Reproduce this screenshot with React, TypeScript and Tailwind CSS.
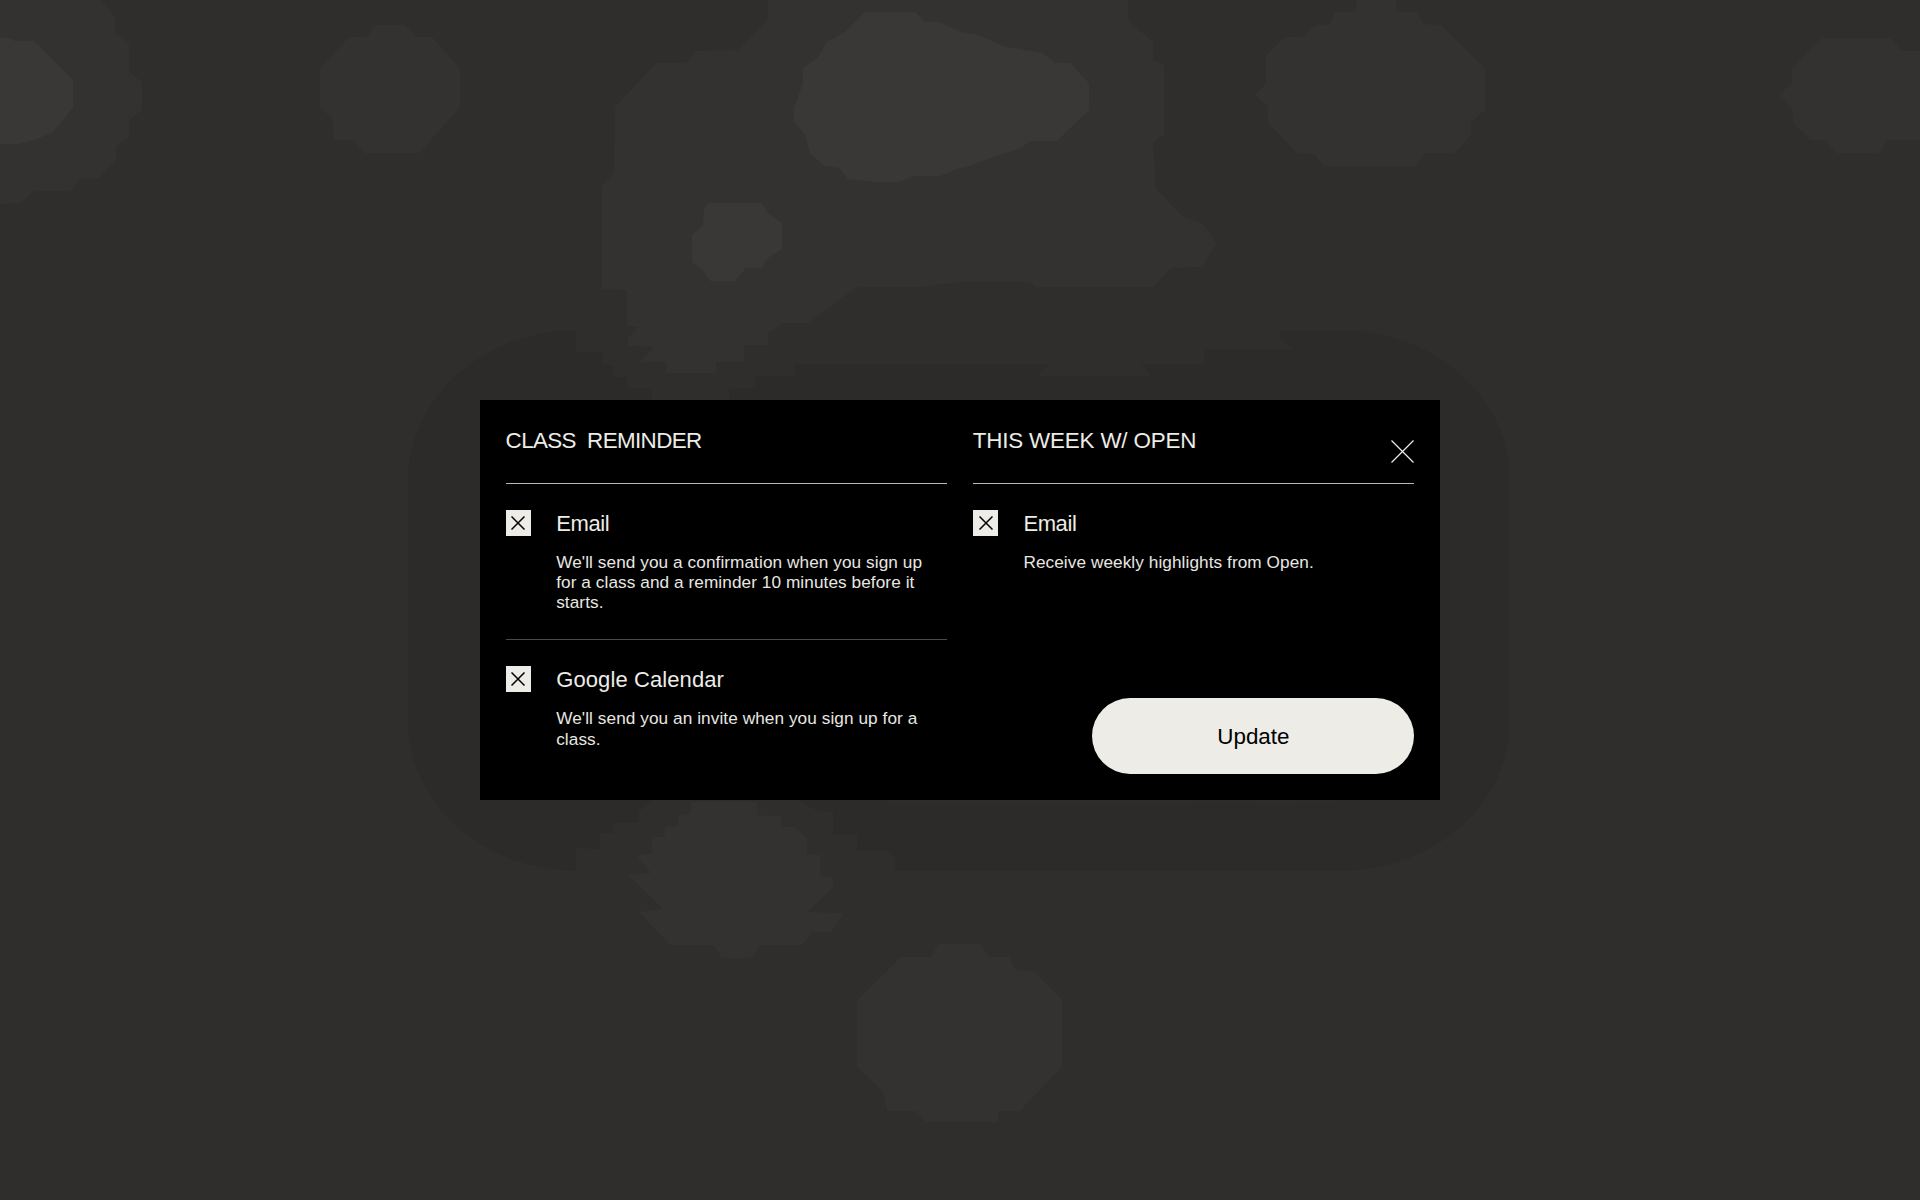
const haloCut =
  "576,300 576,352 602,352 602,365 614,366 614,377 627,377 627,388 652,389 652,400 729,400 729,389 755,388 755,376 794,376 794,364 1049,364 1037,376 1151,376 1141,364 1204,364 1204,349 1292,349 1280,337 1280,300";
const haloCutBottom =
  "652,800 639,811 639,823 614,823 614,833 600,833 600,849 576,848 576,880 895,880 895,858 887,851 857,850 857,835 833,834 833,812 820,812 798,800";

const midShapes = [
  // center mass behind the modal top
  "768,0 768,20 738,50 695,51 686,63 656,63 615,107 614,173 602,185 602,289 627,290 627,326 638,327 628,338 628,346 652,347 652,350 640,362 666,362 666,373 716,373 716,362 744,362 744,345 768,345 768,333 784,323 808,323 857,287 922,287 960,282 1030,282 1036,287 1153,287 1171,268 1202,267 1217,243 1202,223 1183,217 1156,188 1153,143 1164,135 1164,65 1153,60 1153,42 1128,20 1128,0",
  // far left
  "0,0 101,0 115,17 115,33 129,43 129,72 142,82 142,110 129,120 129,137 116,147 116,160 98,178 81,179 70,191 34,191 21,203 0,204",
  "375,25 405,25 416,37 432,37 460,68 460,108 419,153 364,153 354,141 334,140 332,118 320,108 320,68 349,37 367,37",
  "1357,0 1396,0 1396,11 1416,12 1424,24 1441,25 1485,68 1485,110 1471,122 1471,135 1455,153 1425,153 1416,166 1324,166 1315,155 1297,153 1268,123 1268,107 1255,95 1266,83 1266,55 1285,37 1303,37 1315,25 1330,24 1335,12 1355,12",
  "1823,38 1890,38 1902,51 1920,51 1920,140 1888,140 1879,153 1836,153 1826,141 1811,140 1793,123 1792,107 1779,95 1792,83 1792,68",
  // below the modal
  "691,802 757,802 757,815 781,816 781,827 794,827 807,838 807,854 820,855 820,876 833,877 833,888 807,912 844,913 831,932 813,932 802,945 761,945 750,958 722,958 713,945 670,945 639,912 663,909 628,875 651,873 639,860 639,855 652,853 652,837 665,837 665,827 678,826 678,815 691,814",
  "938,944 980,944 990,957 1009,957 1016,970 1033,971 1062,1000 1062,1067 1020,1111 998,1111 998,1122 926,1122 916,1111 887,1111 883,1092 857,1067 857,1000 901,957 931,957",
];

const lightShapes = [
  "0,38 9,38 15,41 34,41 73,80 73,108 52,133 34,140 18,144 0,144",
  "865,12 915,12 925,22 940,22 960,32 978,35 1006,47 1043,53 1055,63 1070,63 1089,83 1089,110 1057,141 1030,141 1021,148 994,157 966,167 960,168 940,176 912,176 900,182 873,182 848,179 839,168 824,166 810,153 805,135 794,122 794,108 803,83 803,68 818,57 827,42 845,32",
  "708,203 762,203 768,213 782,223 782,249 768,258 762,268 746,268 735,281 710,281 703,270 692,262 692,235 703,225 704,210",
];

function Backdrop() {
  return (
    <svg className="absolute inset-0" width="1920" height="1200" viewBox="0 0 1920 1200">
      <rect x="408" y="330" width="1102" height="541" rx="170" ry="150" fill="#2c2b29" />
      <polygon points={haloCut} fill="#2f2e2c" />
      <polygon points={haloCutBottom} fill="#2f2e2c" />
      <polygon points="883,800 883,806 1297,805 1378,800" fill="#2d2c2a" />
      {midShapes.map((p, i) => (
        <polygon key={i} points={p} fill="#333230" />
      ))}
      {lightShapes.map((p, i) => (
        <polygon key={i} points={p} fill="#393836" />
      ))}
    </svg>
  );
}

function Check() {
  return (
    <span className="flex h-[26px] w-[25.6px] shrink-0 items-center justify-center bg-[#edece7]">
      <svg width="14" height="14" viewBox="0 0 14 14" fill="none" stroke="#000" strokeWidth="1.5">
        <path d="M0.5 0.5L13.5 13.5M13.5 0.5L0.5 13.5" />
      </svg>
    </span>
  );
}

function Option({ label, labelClass, children }: { label: string; labelClass: string; children: React.ReactNode }) {
  return (
    <div className="flex gap-[25px]">
      <Check />
      <div>
        <div className={"pt-[1px] text-[22px] leading-[26px] text-[#edece7] " + labelClass}>{label}</div>
        <p className="mt-[15px] max-w-[380px] text-[17.2px] leading-[20.3px] tracking-[0.08px] text-[#e8e7e2]">{children}</p>
      </div>
    </div>
  );
}

export default function App() {
  return (
    <div
      className="relative flex h-[1200px] items-center justify-center overflow-hidden bg-[#2f2e2c]"
      style={{ fontFamily: '"Liberation Sans", Arial, sans-serif' }}
    >
      <Backdrop />
      <div className="relative grid h-[400px] w-[960px] grid-cols-2 gap-[25.6px] bg-black p-[25.6px]">
        <div>
          <div className="h-[58px] border-b-[1.5px] border-[#b9b8b4] pt-[2px] text-[22.4px] leading-[26px] tracking-[-0.62px] whitespace-pre text-[#edece7]">
            CLASS  REMINDER
          </div>
          <div className="border-b-[1.5px] border-[#4a4a48] pt-[26px] pb-[26.5px]">
            <Option label="Email" labelClass="tracking-[-0.4px]">
              We'll send you a confirmation when you sign up for a class and a reminder 10 minutes before it starts.
            </Option>
          </div>
          <div className="pt-[26.5px]">
            <Option label="Google Calendar" labelClass="tracking-[0.1px]">
              We'll send you an invite when you sign up for a class.
            </Option>
          </div>
        </div>

        <div className="flex flex-col">
          <div className="flex h-[58px] justify-between border-b-[1.5px] border-[#b9b8b4] pt-[2px] text-[22.4px] leading-[26px] tracking-[-0.18px] text-[#edece7]">
            <span>THIS WEEK W/ OPEN</span>
            <svg className="mt-[12.4px]" width="23" height="23" viewBox="0 0 23 23" fill="none" stroke="#edece7" strokeWidth="1.2">
              <path d="M0.5 0.5L22.5 22.5M22.5 0.5L0.5 22.5" />
            </svg>
          </div>
          <div className="pt-[26px]">
            <Option label="Email" labelClass="tracking-[-0.4px]">Receive weekly highlights from Open.</Option>
          </div>
          <button className="mt-auto h-[76.8px] w-[322px] self-end rounded-full bg-[#edece7] pt-[2px] text-[22.4px] text-black">
            Update
          </button>
        </div>
      </div>
    </div>
  );
}
